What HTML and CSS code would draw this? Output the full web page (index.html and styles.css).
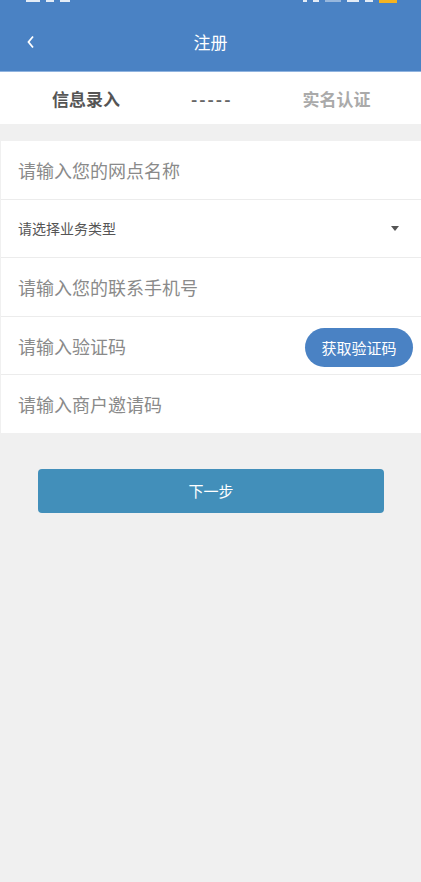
FILE: index.html
```html
<!DOCTYPE html>
<html lang="zh-CN">
<head>
  <meta charset="UTF-8" />
  <title>注册</title>
  <link rel="stylesheet" href="styles.css">
</head>
<body>
  <div class="header">
    <div class="status">
      <span class="status-left">
        <i class="bit w14"></i><i class="bit w8"></i><i class="bit w10"></i>
      </span>
      <span class="status-right">
        <i class="bit w4"></i><i class="bit w6"></i><i class="bit w16 dim"></i><i class="bit w12"></i><i class="bit w8"></i><i class="battery"></i>
      </span>
    </div>
    <div class="nav">
      <span class="back">
        <svg width="12" height="16" viewBox="0 0 12 16"><path d="M8 2.5 L3.5 8 L8 13.5" fill="none" stroke="#fff" stroke-width="1.8"/></svg>
      </span>
      <span class="title">注册</span>
    </div>
  </div>

  <div class="steps">
    <span class="step active">信息录入</span>
    <span class="step dash">-----</span>
    <span class="step">实名认证</span>
  </div>

  <div class="form">
    <div class="row"><span class="ph">请输入您的网点名称</span></div>
    <div class="row select">
      <span class="ph small">请选择业务类型</span>
      <span class="caret"></span>
    </div>
    <div class="row"><span class="ph">请输入您的联系手机号</span></div>
    <div class="row">
      <span class="ph">请输入验证码</span>
      <button class="code-btn">获取验证码</button>
    </div>
    <div class="row"><span class="ph">请输入商户邀请码</span></div>
  </div>

  <div class="actions">
    <button class="next-btn">下一步</button>
  </div>
</body>
</html>
```

FILE: styles.css
```css
html, body {
  margin: 0;
  padding: 0;
  height: 100%;
  background: #f0f0f0;
  font-family: "Noto Sans CJK SC", "Noto Sans", sans-serif;
}

.header {
  background: #4a82c4;
  height: 71px;
  border-bottom: 1px solid #8fb3df;
  color: #fff;
}

.status {
  height: 6px;
  display: flex;
  justify-content: space-between;
  padding: 0 24px 0 26px;
  overflow: hidden;
}

.status-left, .status-right {
  display: flex;
  gap: 6px;
  align-items: flex-start;
}

.bit {
  display: block;
  height: 2px;
  background: rgba(255, 255, 255, 0.85);
}

.bit.dim {
  opacity: 0.5;
}

.w4 { width: 4px; }
.w6 { width: 6px; }
.w8 { width: 8px; }
.w10 { width: 10px; }
.w12 { width: 12px; }
.w14 { width: 14px; }
.w16 { width: 16px; }

.battery {
  display: block;
  width: 18px;
  height: 3px;
  background: #f4b321;
}

.nav {
  height: 65px;
  display: flex;
  align-items: center;
  justify-content: center;
  position: relative;
}

.back {
  position: absolute;
  left: 25px;
  top: 28px;
  display: flex;
}

.title {
  font-size: 17px;
  margin-top: 6px;
}

.steps {
  background: #fff;
  height: 52px;
  display: flex;
  align-items: center;
  padding: 0 30px 0 52px;
}

.step {
  font-size: 17px;
  font-weight: 700;
  color: #aaa;
}

.step.active {
  color: #555;
}

.step.dash {
  color: #666;
  margin: 0 70px 0 71px;
  letter-spacing: 2px;
}

.form {
  margin: 17px 0 0 1px;
  background: #fff;
}

.row {
  height: 57.6px;
  display: flex;
  align-items: center;
  justify-content: space-between;
  padding: 0 8px 0 17px;
  border-bottom: 1px solid #ececec;
}

.row:last-child {
  border-bottom: none;
}

.ph {
  font-size: 18px;
  color: #8a8a8a;
}

.ph.small {
  font-size: 14px;
  color: #555;
}

.caret {
  width: 0;
  height: 0;
  border-left: 4px solid transparent;
  border-right: 4px solid transparent;
  border-top: 5px solid #555;
  margin-right: 14px;
}

.code-btn {
  font-family: inherit;
  background: #4a82c4;
  color: #fff;
  font-size: 15px;
  border: none;
  border-radius: 20px;
  height: 39px;
  width: 108px;
  padding: 0;
  margin-top: 4px;
}

.actions {
  padding: 36px 37px 0 38px;
}

.next-btn {
  font-family: inherit;
  width: 100%;
  height: 44px;
  border: none;
  border-radius: 4px;
  background: #428fba;
  color: #fff;
  font-size: 15px;
}
```
